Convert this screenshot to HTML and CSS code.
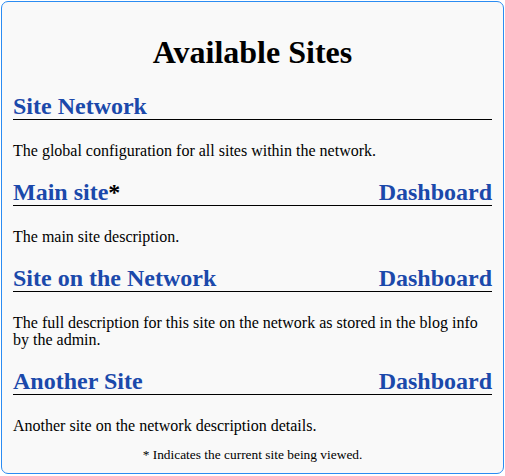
FILE: index.html
```html
<!DOCTYPE html>
<html>
<head>
<meta charset="utf-8">
<link rel="stylesheet" href="styles.css">
</head>
<body>
<div class="box">
  <h1 class="title">Available Sites</h1>
  <div class="site">
    <h2 class="site-head"><a class="link">Site Network</a></h2>
    <p class="desc">The global configuration for all sites within the network.</p>
  </div>
  <div class="site">
    <h2 class="site-head"><span><a class="link">Main site</a><span class="star">*</span></span><a class="link">Dashboard</a></h2>
    <p class="desc">The main site description.</p>
  </div>
  <div class="site">
    <h2 class="site-head"><a class="link">Site on the Network</a><a class="link">Dashboard</a></h2>
    <p class="desc">The full description for this site on the network as stored in the blog info by the admin.</p>
  </div>
  <div class="site">
    <h2 class="site-head"><a class="link">Another Site</a><a class="link">Dashboard</a></h2>
    <p class="desc">Another site on the network description details.</p>
  </div>
  <p class="note">* Indicates the current site being viewed.</p>
</div>
</body>
</html>
```
FILE: styles.css
```css
html, body {
  margin: 0;
  padding: 0;
  background: #ffffff;
}
body {
  padding: 1px;
  font-family: "Liberation Serif", "Times New Roman", serif;
  color: #000;
}
.box {
  box-sizing: border-box;
  width: 503px;
  height: 473px;
  border: 1px solid #2b8cf2;
  border-radius: 7px;
  background: #f9f9f9;
  padding: 0 11px;
}
.title {
  margin: 0;
  padding-top: 32px;
  text-align: center;
  font-size: 32px;
  font-weight: bold;
  line-height: 37px;
  margin-bottom: 23px;
}
.site-head {
  margin: 0;
  display: flex;
  justify-content: space-between;
  align-items: baseline;
  font-size: 24px;
  line-height: 25px;
  border-bottom: 1px solid #000;
  font-weight: bold;
}
.link {
  color: #1b49ab;
}
.star {
  color: #000;
}
.desc {
  margin: 22px 0 21px;
  font-size: 16px;
  line-height: 17px;
}
.note {
  margin: 0;
  margin-top: -8px;
  text-align: center;
  font-size: 13.4px;
  line-height: 15px;
}
```
